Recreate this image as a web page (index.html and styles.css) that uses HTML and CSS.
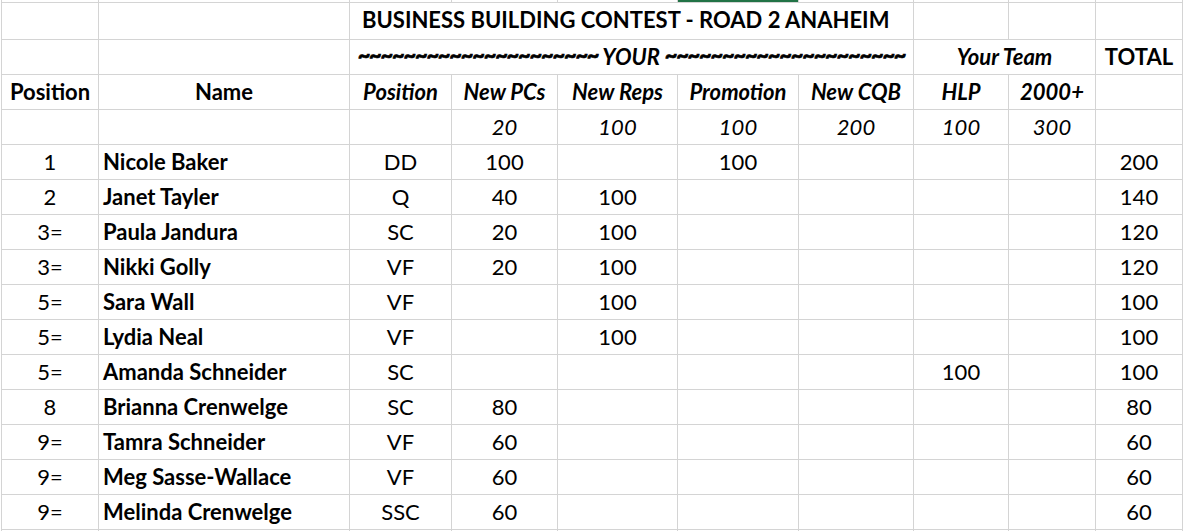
FILE: index.html
```html
<!DOCTYPE html>
<html>
<head>
<meta charset="utf-8">
<link rel="stylesheet" href="styles.css">
</head>
<body>
<table class="sheet">
  <colgroup>
    <col class="c1"><col class="c2"><col class="c3"><col class="c4"><col class="c5"><col class="c6"><col class="c7"><col class="c8"><col class="c9"><col class="c10">
  </colgroup>
  <tr class="stub">
    <td></td><td></td><td></td><td></td><td></td><td class="sel"></td><td></td><td></td><td></td><td></td>
  </tr>
  <tr>
    <td></td><td></td>
    <td colspan="5" class="title">BUSINESS BUILDING CONTEST - ROAD 2 ANAHEIM</td>
    <td></td><td></td><td></td>
  </tr>
  <tr>
    <td></td><td></td>
    <td colspan="5" class="hdr-it"><span class="tilde">~~~~~~~~~~~~~~~~~~~~~</span> YOUR <span class="tilde">~~~~~~~~~~~~~~~~~~~~~</span></td>
    <td colspan="2" class="hdr-it">Your Team</td>
    <td class="hdr">TOTAL</td>
  </tr>
  <tr>
    <td class="hdr">Position</td>
    <td class="hdr">Name</td>
    <td class="hdr-it">Position</td>
    <td class="hdr-it">New PCs</td>
    <td class="hdr-it">New Reps</td>
    <td class="hdr-it">Promotion</td>
    <td class="hdr-it">New CQB</td>
    <td class="hdr-it">HLP</td>
    <td class="hdr-it">2000+</td>
    <td></td>
  </tr>
  <tr class="pts">
    <td></td><td></td><td></td>
    <td>20</td><td>100</td><td>100</td><td>200</td><td>100</td><td>300</td>
    <td></td>
  </tr>
  <tr><td>1</td><td class="name">Nicole Baker</td><td>DD</td><td>100</td><td></td><td>100</td><td></td><td></td><td></td><td>200</td></tr>
  <tr><td>2</td><td class="name">Janet Tayler</td><td>Q</td><td>40</td><td>100</td><td></td><td></td><td></td><td></td><td>140</td></tr>
  <tr><td>3=</td><td class="name">Paula Jandura</td><td>SC</td><td>20</td><td>100</td><td></td><td></td><td></td><td></td><td>120</td></tr>
  <tr><td>3=</td><td class="name">Nikki Golly</td><td>VF</td><td>20</td><td>100</td><td></td><td></td><td></td><td></td><td>120</td></tr>
  <tr><td>5=</td><td class="name">Sara Wall</td><td>VF</td><td></td><td>100</td><td></td><td></td><td></td><td></td><td>100</td></tr>
  <tr><td>5=</td><td class="name">Lydia Neal</td><td>VF</td><td></td><td>100</td><td></td><td></td><td></td><td></td><td>100</td></tr>
  <tr><td>5=</td><td class="name">Amanda Schneider</td><td>SC</td><td></td><td></td><td></td><td></td><td>100</td><td></td><td>100</td></tr>
  <tr><td>8</td><td class="name">Brianna Crenwelge</td><td>SC</td><td>80</td><td></td><td></td><td></td><td></td><td></td><td>80</td></tr>
  <tr><td>9=</td><td class="name">Tamra Schneider</td><td>VF</td><td>60</td><td></td><td></td><td></td><td></td><td></td><td>60</td></tr>
  <tr><td>9=</td><td class="name">Meg Sasse-Wallace</td><td>VF</td><td>60</td><td></td><td></td><td></td><td></td><td></td><td>60</td></tr>
  <tr><td>9=</td><td class="name">Melinda Crenwelge</td><td>SSC</td><td>60</td><td></td><td></td><td></td><td></td><td></td><td>60</td></tr>
  <tr class="stub-bottom"><td></td><td></td><td></td><td></td><td></td><td></td><td></td><td></td><td></td><td></td></tr>
</table>
</body>
</html>
```

FILE: styles.css
```css
html, body {
  margin: 0;
  padding: 0;
  background: #ffffff;
  overflow: hidden;
}

.sheet {
  margin-left: 1px;
  border-collapse: collapse;
  table-layout: fixed;
  width: 1181px;
  font-family: Lato, "Open Sans", sans-serif;
  font-size: 22px;
  color: #000;
}

.c1 { width: 97px; }
.c2 { width: 251px; }
.c3 { width: 102px; }
.c4 { width: 106px; }
.c5 { width: 120px; }
.c6 { width: 121px; }
.c7 { width: 115px; }
.c8 { width: 95px; }
.c9 { width: 87px; }
.c10 { width: 87px; }

.sheet td {
  border: 1px solid #d4d4d4;
  height: 30px;
  padding: 0 4px 4px;
  text-align: center;
  vertical-align: bottom;
  white-space: nowrap;
  overflow: visible;
  line-height: 26px;
}

.sheet tr.stub td {
  height: 2px;
  padding: 0;
  border-top: none;
  line-height: 0;
}

.sheet tr.stub td.sel {
  background: #217346;
}

.sheet tr.stub-bottom td {
  height: 10px;
  padding: 0;
  border-bottom: none;
}

.sheet td.title {
  text-align: left;
  padding-left: 12px;
  padding-bottom: 6px;
  font-weight: 700;
}

.sheet td.hdr {
  font-weight: 700;
}

.sheet td.hdr-it {
  font-weight: 700;
  font-style: italic;
}

.tilde {
  letter-spacing: -1.3px;
  position: relative;
  top: -2px;
  -webkit-text-stroke: 0.7px #000;
}

.sheet tr.pts td {
  font-style: italic;
}

.sheet td.name {
  text-align: left;
  font-weight: 700;
}
```
